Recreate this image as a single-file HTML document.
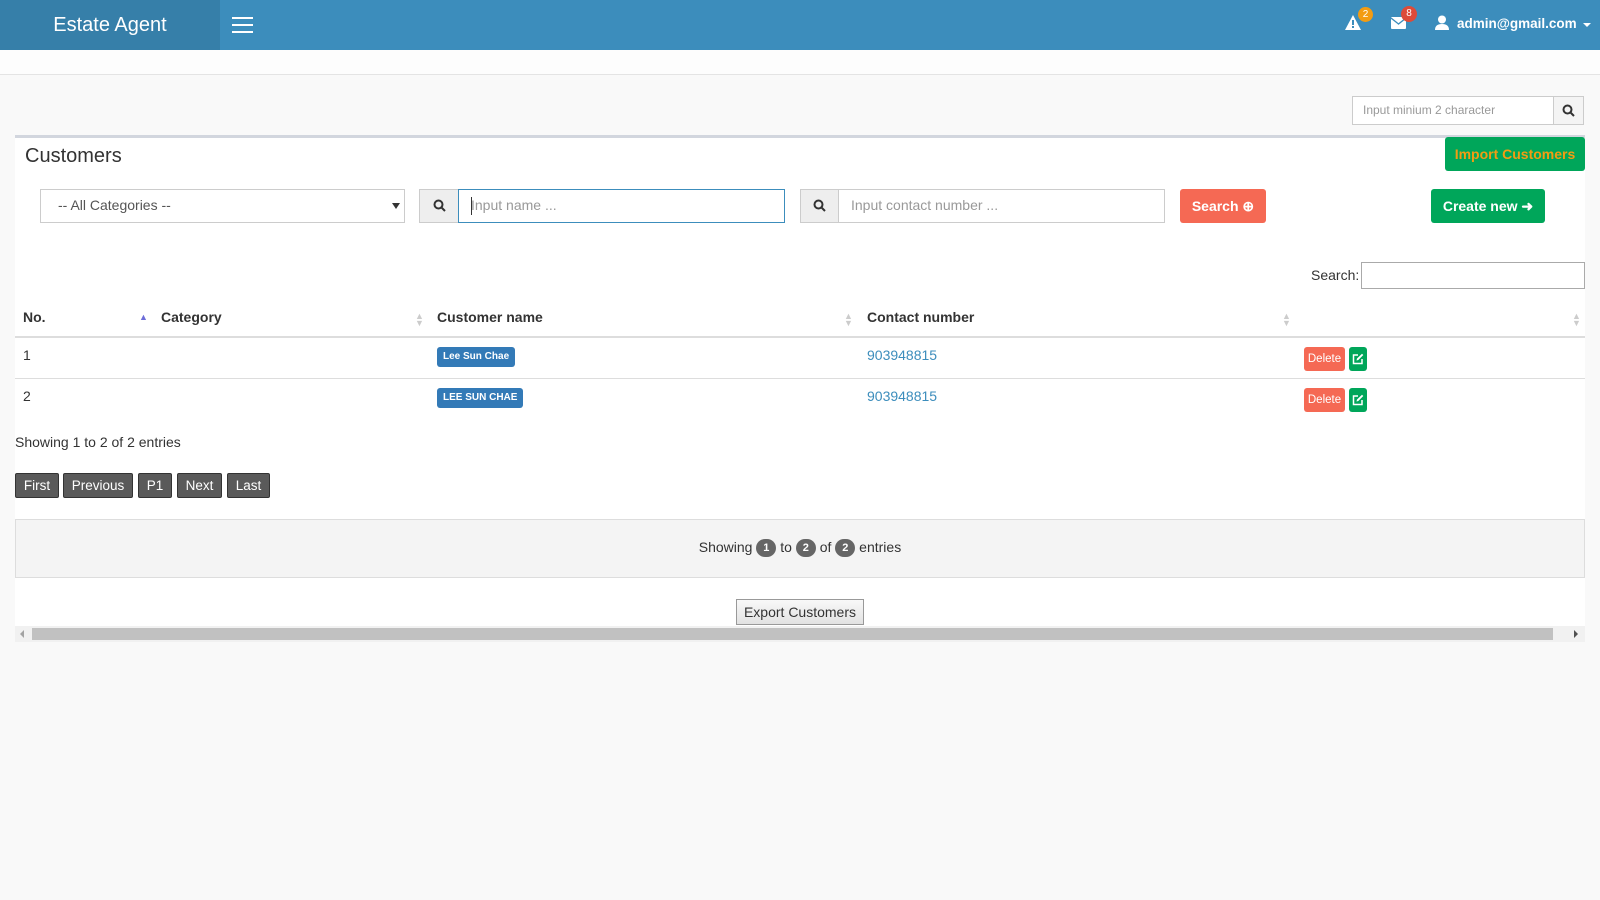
<!DOCTYPE html>
<html><head><meta charset="utf-8"><style>
*{box-sizing:border-box;margin:0;padding:0}
body{width:1600px;height:900px;background:#f9f9f9;font-family:"Liberation Sans",sans-serif;font-size:14px;color:#333;position:relative;overflow:hidden}
.a{position:absolute}
.hdr{left:0;top:0;width:1600px;height:50px;background:#3c8dbc}
.logo{left:0;top:0;width:220px;height:50px;background:#367fa9;color:#fff;font-size:20px;text-align:center;line-height:50px}
.sub{left:0;top:50px;width:1600px;height:25px;background:#fdfdfd;border-bottom:1px solid #e4e4e4}
.box{left:15px;top:135px;width:1570px;height:507px;background:#fff;border-top:3px solid #d2d6de}
.inp{background:#fff;border:1px solid #ccc;color:#999;font-size:14px;padding-left:12px;line-height:31px}
.addon{background:#eee;border:1px solid #ccc}
.btn{color:#fff;border-radius:3px;text-align:center;font-weight:bold;font-size:14px}
.th{font-weight:bold;top:309px}
.pg{top:473px;height:25px;background:#5a5a5a;color:#fff;border:1px solid #333;border-radius:2px;font-size:13.5px;line-height:23px;text-align:center}
.badge{display:inline-block;width:20px;height:18px;border-radius:9px;background:#666;color:#fff;font-size:11px;font-weight:bold;line-height:18px;text-align:center;vertical-align:middle}
.lbl{background:#337ab7;color:#fff;font-size:10px;font-weight:bold;border-radius:3px;padding:0 6px;line-height:20px;height:20px}
.del{background:#f56954;color:#fff;font-size:11.5px;border-radius:3px;height:24px;line-height:24px;width:41px;text-align:center}
.ed{background:#00a65a;border-radius:3px;width:18px;height:24px}
.sort{color:#ccc;font-size:9px;line-height:7px}
</style></head><body>
<div class="a hdr"></div>
<div class="a logo">Estate Agent</div>
<div class="a" style="left:232px;top:17px;width:21px;height:2px;background:#fff;box-shadow:0 7px 0 #fff,0 14px 0 #fff"></div>
<svg class="a" style="left:1345px;top:15px" width="16" height="15" viewBox="0 0 16 15"><path d="M8 0L16 15H0Z" fill="#fff"/><rect x="7" y="5" width="2" height="5" fill="#3c8dbc"/><rect x="7" y="11" width="2" height="2" fill="#3c8dbc"/></svg>
<div class="a" style="left:1358px;top:7px;width:15px;height:15px;border-radius:8px;background:#f39c12;color:#fff;font-size:10px;text-align:center;line-height:15px">2</div>
<svg class="a" style="left:1391px;top:17px" width="15" height="12" viewBox="0 0 15 12"><rect width="15" height="12" rx="1" fill="#fff"/><path d="M0 1L7.5 7L15 1" stroke="#3c8dbc" stroke-width="1.3" fill="none"/></svg>
<div class="a" style="left:1401px;top:6px;width:16px;height:16px;border-radius:8px;background:#dd4b39;color:#fff;font-size:10px;text-align:center;line-height:16px">8</div>
<svg class="a" style="left:1435px;top:15px" width="14" height="15" viewBox="0 0 14 15"><circle cx="7" cy="4.5" r="4" fill="#fff"/><path d="M0 15Q0 9 7 9Q14 9 14 15Z" fill="#fff"/></svg>
<div class="a" style="left:1457px;top:16px;color:#fff;font-weight:bold;font-size:13.5px">admin@gmail.com</div>
<div class="a" style="left:1583px;top:23px;border:4px solid transparent;border-top-color:#fff"></div>
<div class="a sub"></div>
<div class="a inp" style="left:1352px;top:96px;width:202px;height:29px;line-height:27px;font-size:12px;padding-left:10px">Input minium 2 character</div>
<div class="a addon" style="left:1553px;top:96px;width:31px;height:29px;background:#f4f4f4"></div>
<svg class="a" style="left:1562px;top:104px" width="13" height="13" viewBox="0 0 13 13"><circle cx="5.5" cy="5.5" r="4" stroke="#333" stroke-width="2" fill="none"/><path d="M8.5 8.5L12 12" stroke="#333" stroke-width="2"/></svg>
<div class="a box"></div>
<div class="a" style="left:25px;top:145px;font-size:20px">Customers</div>
<div class="a btn" style="left:1445px;top:137px;width:140px;height:34px;background:#00a65a;color:#f39c12;line-height:34px">Import Customers</div>
<div class="a inp" style="left:40px;top:189px;width:365px;height:34px;color:#555;padding-left:17px">-- All Categories --</div>
<div class="a" style="left:392px;top:203px;border:4px solid transparent;border-top:6px solid #333;border-bottom:0"></div>
<div class="a addon" style="left:419px;top:189px;width:40px;height:34px"></div>
<svg class="a" style="left:433px;top:199px" width="13" height="13" viewBox="0 0 13 13"><circle cx="5.5" cy="5.5" r="4" stroke="#333" stroke-width="2" fill="none"/><path d="M8.5 8.5L12 12" stroke="#333" stroke-width="2"/></svg>
<div class="a inp" style="left:458px;top:189px;width:327px;height:34px;border-color:#3c8dbc">Input name ...</div>
<div class="a" style="left:471px;top:197px;width:1px;height:18px;background:#333"></div>
<div class="a addon" style="left:800px;top:189px;width:39px;height:34px"></div>
<svg class="a" style="left:813px;top:199px" width="13" height="13" viewBox="0 0 13 13"><circle cx="5.5" cy="5.5" r="4" stroke="#333" stroke-width="2" fill="none"/><path d="M8.5 8.5L12 12" stroke="#333" stroke-width="2"/></svg>
<div class="a inp" style="left:838px;top:189px;width:327px;height:34px">Input contact number ...</div>
<div class="a btn" style="left:1180px;top:189px;width:86px;height:34px;background:#f56954;line-height:34px">Search &#x2295;</div>
<div class="a btn" style="left:1431px;top:189px;width:114px;height:34px;background:#00a65a;line-height:34px">Create new &#x279C;</div>
<div class="a" style="left:1311px;top:267px">Search:</div>
<div class="a" style="left:1361px;top:262px;width:224px;height:27px;border:1px solid #aaa;background:#fff"></div>
<div class="a th" style="left:23px">No.</div>
<div class="a" style="left:139px;top:312px;color:#6d6dd8;font-size:9px">&#9650;</div>
<div class="a th" style="left:161px">Category</div>
<div class="a sort" style="left:415px;top:313px">&#9650;<br>&#9660;</div>
<div class="a th" style="left:437px">Customer name</div>
<div class="a sort" style="left:844px;top:313px">&#9650;<br>&#9660;</div>
<div class="a th" style="left:867px">Contact number</div>
<div class="a sort" style="left:1282px;top:313px">&#9650;<br>&#9660;</div>
<div class="a sort" style="left:1572px;top:313px">&#9650;<br>&#9660;</div>
<div class="a" style="left:15px;top:336px;width:1570px;height:2px;background:#ddd"></div>
<div class="a" style="left:23px;top:347px">1</div>
<div class="a lbl" style="left:437px;top:347px">Lee Sun Chae</div>
<div class="a" style="left:867px;top:347px;color:#3c8dbc">903948815</div>
<div class="a del" style="left:1304px;top:347px">Delete</div>
<div class="a ed" style="left:1349px;top:347px"></div>
<div class="a" style="left:15px;top:378px;width:1570px;height:1px;background:#ddd"></div>
<div class="a" style="left:23px;top:388px">2</div>
<div class="a lbl" style="left:437px;top:388px">LEE SUN CHAE</div>
<div class="a" style="left:867px;top:388px;color:#3c8dbc">903948815</div>
<div class="a del" style="left:1304px;top:388px">Delete</div>
<div class="a ed" style="left:1349px;top:388px"></div>
<svg class="a" style="left:1352px;top:353px" width="12" height="12" viewBox="0 0 12 12"><path d="M6 2H1.5V10.5H10V6" stroke="#fff" stroke-width="1.5" fill="none"/><path d="M4.5 7.5L5 5.5L10 0.8L11.3 2L6.3 7Z" fill="#fff"/></svg>
<svg class="a" style="left:1352px;top:394px" width="12" height="12" viewBox="0 0 12 12"><path d="M6 2H1.5V10.5H10V6" stroke="#fff" stroke-width="1.5" fill="none"/><path d="M4.5 7.5L5 5.5L10 0.8L11.3 2L6.3 7Z" fill="#fff"/></svg>
<div class="a" style="left:15px;top:434px">Showing 1 to 2 of 2 entries</div>
<div class="a pg" style="left:15px;width:44px">First</div>
<div class="a pg" style="left:63px;width:70px">Previous</div>
<div class="a pg" style="left:138px;width:34px">P1</div>
<div class="a pg" style="left:177px;width:45px">Next</div>
<div class="a pg" style="left:227px;width:43px">Last</div>
<div class="a" style="left:15px;top:519px;width:1570px;height:59px;background:#f4f4f4;border:1px solid #ddd"></div>
<div class="a" style="left:0;top:539px;width:1600px;text-align:center">Showing <span class="badge">1</span> to <span class="badge">2</span> of <span class="badge">2</span> entries</div>
<div class="a" style="left:736px;top:599px;width:128px;height:26px;border:1px solid #999;background:linear-gradient(#f8f8f8,#e2e2e2);text-align:center;line-height:24px;font-size:14px">Export Customers</div>
<div class="a" style="left:15px;top:626px;width:1570px;height:16px;background:#f1f1f1"></div>
<div class="a" style="left:32px;top:628px;width:1521px;height:12px;background:#c1c1c1"></div>
<div class="a" style="left:20px;top:630px;border:4px solid transparent;border-right-color:#a3a3a3;border-left:0"></div>
<div class="a" style="left:1574px;top:630px;border:4px solid transparent;border-left-color:#505050;border-right:0"></div>
</body></html>
